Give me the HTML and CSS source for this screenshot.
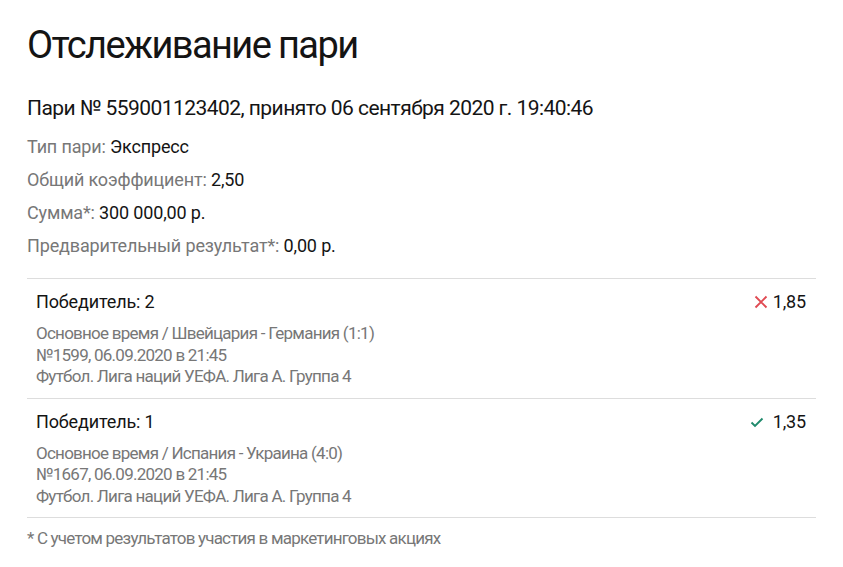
FILE: index.html
```html
<!DOCTYPE html>
<html>
<head>
    <meta charset="UTF-8">
    <title>Отслеживание пари</title>
    <link rel="stylesheet" href="styles.css">
</head>
<body>
    <div class="page">
        <h1 class="title">Отслеживание пари</h1>
        <div class="bet-head">Пари № 559001123402, принято 06 сентября 2020 г. 19:40:46</div>

        <div class="info">
            <div class="info-row"><span class="label">Тип пари:</span> Экспресс</div>
            <div class="info-row"><span class="label">Общий коэффициент:</span> 2,50</div>
            <div class="info-row"><span class="label">Сумма*:</span> 300 000,00 р.</div>
            <div class="info-row"><span class="label">Предварительный результат*:</span> 0,00 р.</div>
        </div>

        <!-- events of the express bet -->
        <div class="events">
            <div class="event">
                <div class="event-top">
                    <div class="outcome">Победитель: 2</div>
                    <div class="odds">
                        <svg class="icon icon-lost" width="14" height="14" viewBox="0 0 14 14">
                            <path d="M1.5 1.5 L12.5 12.5 M12.5 1.5 L1.5 12.5" stroke="#e04a52" stroke-width="1.9" fill="none"/>
                        </svg>
                        <span>1,85</span>
                    </div>
                </div>
                <div class="event-info">
                    Основное время / Швейцария - Германия (1:1)<br>
                    №1599, 06.09.2020 в 21:45<br>
                    Футбол. Лига наций УЕФА. Лига А. Группа 4
                </div>
            </div>
            <div class="event">
                <div class="event-top">
                    <div class="outcome">Победитель: 1</div>
                    <div class="odds">
                        <svg class="icon icon-won" width="14" height="14" viewBox="0 0 14 14">
                            <path d="M1.5 7.5 L5 11 L12.5 3.5" stroke="#1f8a6c" stroke-width="1.9" fill="none"/>
                        </svg>
                        <span>1,35</span>
                    </div>
                </div>
                <div class="event-info">
                    Основное время / Испания - Украина (4:0)<br>
                    №1667, 06.09.2020 в 21:45<br>
                    Футбол. Лига наций УЕФА. Лига А. Группа 4
                </div>
            </div>
        </div>

        <div class="note">* С учетом результатов участия в маркетинговых акциях</div>
    </div>
</body>
</html>
```

FILE: styles.css
```css
body {
    margin: 0;
    background-color: #ffffff;
    font-family: Roboto, "Noto Sans", Arial, sans-serif;
    color: #141414;
    }

.page {
    width: 789px;
    padding: 24px 0 0 27px;
    }

.title {
    margin: 0;
    font-size: 38px;
    font-weight: 400;
    line-height: 42px;
    letter-spacing: -1.6px;
    }

.bet-head {
    margin-top: 30px;
    font-size: 21px;
    line-height: 24px;
    letter-spacing: -0.55px;
    }

.info {
    margin-top: 10px;
    }
.info-row {
    font-size: 18px;
    line-height: 33px;
    letter-spacing: -0.15px;
    }
.label {
    color: #777777;
    }

.events {
    margin-top: 16px;
    border-top: 1px solid #dddddd;
    }
.event {
    padding: 11px 10px 10px 9px;
    border-bottom: 1px solid #dddddd;
    }
.event-top {
    display: flex;
    justify-content: space-between;
    align-items: center;
    font-size: 18px;
    line-height: 24px;
    letter-spacing: -0.15px;
    }
.odds {
    display: flex;
    align-items: center;
    }
.icon-lost {
    margin-right: 5px;
    }
.icon-won {
    margin-right: 9px;
    }
.event-info {
    margin-top: 9px;
    color: #777777;
    font-size: 17px;
    line-height: 21.5px;
    letter-spacing: -0.75px;
    }

.note {
    margin-top: 10px;
    color: #777777;
    font-size: 17px;
    line-height: 20px;
    letter-spacing: -0.8px;
    }
```
